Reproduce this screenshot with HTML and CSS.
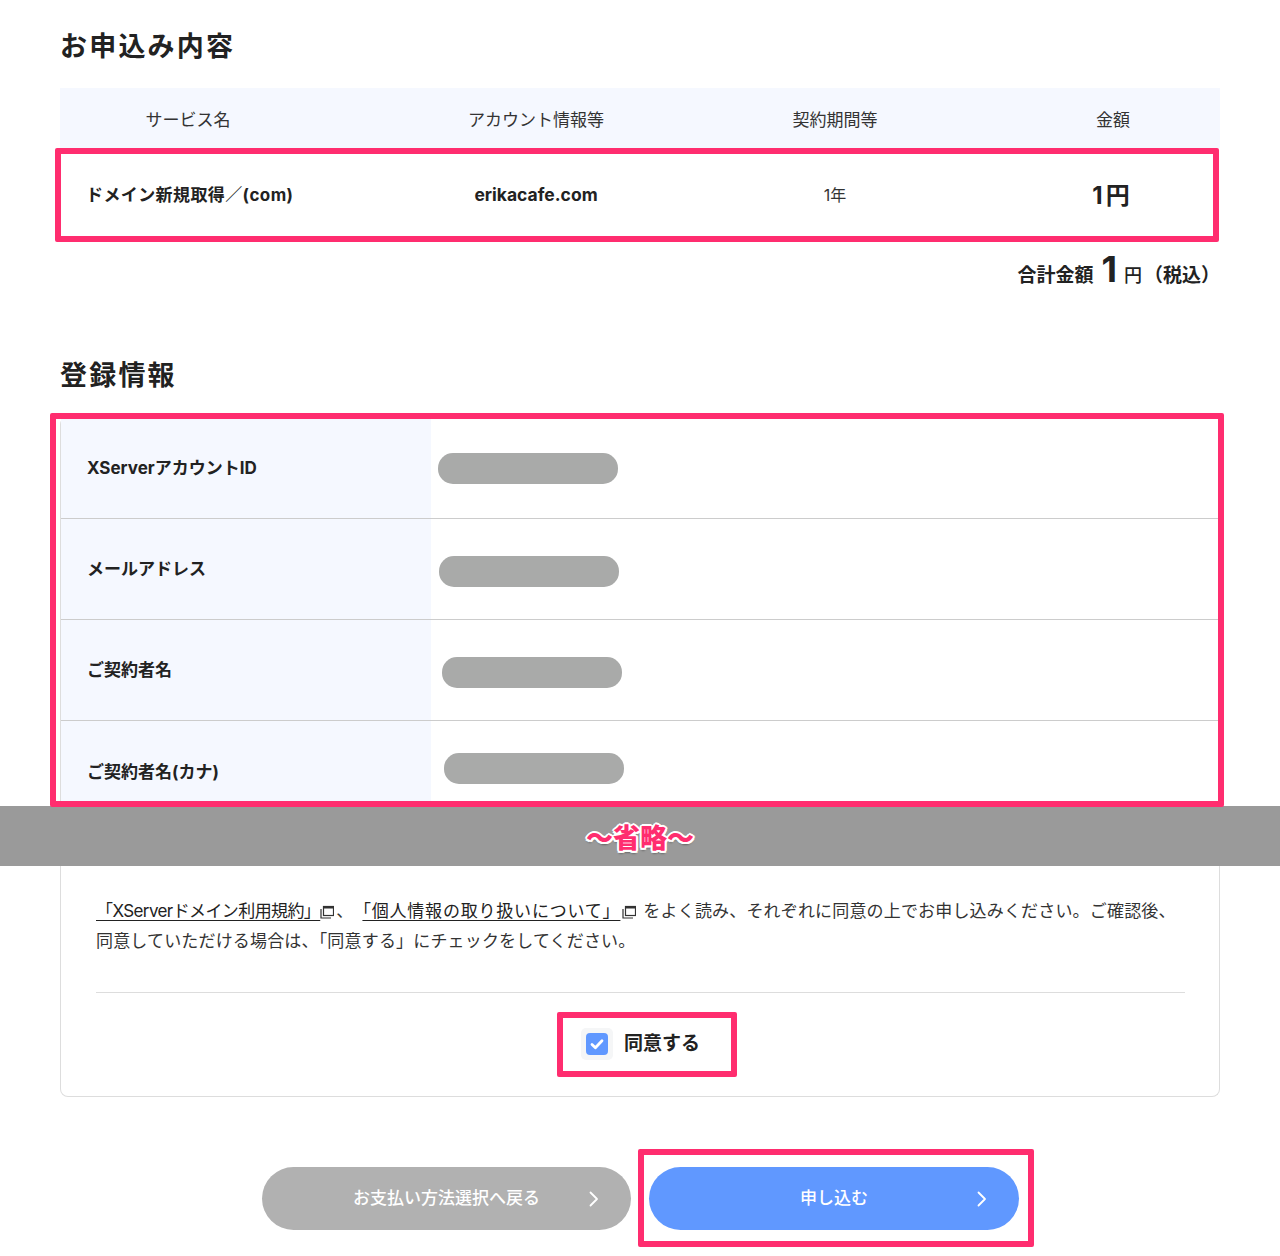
FILE: index.html
```html
<!DOCTYPE html>
<html lang="ja">
<head>
<meta charset="utf-8">
<title>お申込み内容</title>
<link rel="stylesheet" href="styles.css">
</head>
<body>
<div class="top">
  <section class="order">
    <h2 class="heading">お申込み内容</h2>
    <div class="order-table">
      <div class="order-row order-head">
        <div class="c1">サービス名</div>
        <div class="c2">アカウント情報等</div>
        <div class="c3">契約期間等</div>
        <div class="c4">金額</div>
      </div>
      <div class="order-row order-body">
        <div class="c1 service">ドメイン新規取得／(com)</div>
        <div class="c2 domain">erikacafe.com</div>
        <div class="c3 term">1年</div>
        <div class="c4 price">1<span class="yen">円</span></div>
        <div class="mark mark-order"></div>
      </div>
    </div>
    <p class="total">合計金額<b class="total-num">1</b><span class="total-yen">円</span><span class="total-tax">（税込）</span></p>
  </section>
  <section class="info">
    <h2 class="heading heading-wide">登録情報</h2>
    <div class="info-table">
      <div class="info-row"><div class="info-label">XServerアカウントID</div><div class="info-value"><i class="blur blur-1"></i></div></div>
      <div class="info-row"><div class="info-label">メールアドレス</div><div class="info-value"><i class="blur blur-2"></i></div></div>
      <div class="info-row"><div class="info-label">ご契約者名</div><div class="info-value"><i class="blur blur-3"></i></div></div>
      <div class="info-row info-row-last"><div class="info-label">ご契約者名(カナ)</div><div class="info-value"><i class="blur blur-4"></i></div></div>
      <div class="mark mark-info"></div>
    </div>
  </section>
</div>
<div class="omit">〜省略〜</div>
<div class="bottom">
  <section class="agree">
    <p class="agree-text"><a class="link link-1">「XServerドメイン利用規約」</a><svg class="ext" viewBox="0 0 14 14"><rect x="3.500" y="1.500" width="10" height="9" fill="#fff" stroke="#333" stroke-width="1.200"/><rect x="3.500" y="1.500" width="10" height="2" fill="#333"/><path d="M1 4v9h10" fill="none" stroke="#333" stroke-width="1.200"/></svg>、<a class="link link-2">「個人情報の取り扱いについて」</a><svg class="ext ext-2" viewBox="0 0 14 14"><rect x="3.500" y="1.500" width="10" height="9" fill="#fff" stroke="#333" stroke-width="1.200"/><rect x="3.500" y="1.500" width="10" height="2" fill="#333"/><path d="M1 4v9h10" fill="none" stroke="#333" stroke-width="1.200"/></svg> をよく読み、それぞれに同意の上でお申し込みください。ご確認後、<br>同意していただける場合は、「同意する」にチェックをしてください。</p>
    <div class="agree-check">
      <label class="check-label">
        <span class="check-outer"><span class="check-box"><svg viewBox="0 0 20 20" class="check-icon"><path d="M5 10.500l3.400 3.200L15 6.800" fill="none" stroke="#fff" stroke-width="2.800" stroke-linecap="round" stroke-linejoin="round"/></svg></span></span>
        同意する
        <span class="mark mark-check"></span>
      </label>
    </div>
  </section>
  <div class="actions">
    <button class="btn btn-back">お支払い方法選択へ戻る<svg class="chev" viewBox="0 0 12 16"><path d="M2.500 1.500L9 8l-6.500 6.500" fill="none" stroke="#fff" stroke-width="1.800" stroke-linecap="round" stroke-linejoin="round"/></svg></button>
    <button class="btn btn-go">申し込む<svg class="chev" viewBox="0 0 12 16"><path d="M2.500 1.500L9 8l-6.500 6.500" fill="none" stroke="#fff" stroke-width="1.800" stroke-linecap="round" stroke-linejoin="round"/></svg><span class="mark mark-btn"></span></button>
  </div>
</div>
</body>
</html>
```
FILE: styles.css
```css
* { box-sizing: border-box; }
html, body { margin: 0; padding: 0; }
body {
  width: 1280px;
  height: 1256px;
  overflow: hidden;
  background: #fff;
  color: #222;
  font-family: "Inter", "Noto Sans CJK JP", sans-serif;
}
.top { height: 806px; padding: 0 60px; position: relative; z-index: 1; }
.bottom { padding: 0 60px; }
.heading {
  margin: 0;
  height: 88px;
  padding-top: 28px;
  font-size: 27px;
  line-height: 38px;
  font-weight: 700;
  letter-spacing: 2.200px;
  color: #222;
}
.heading-wide { height: 62px; padding-top: 1px; }
.order-row { display: flex; align-items: center; position: relative; }
.order-head { height: 60px; background: #f5f8ff; font-size: 17px; color: #333; text-align: center; }
.order-body { height: 94px; text-align: center; padding-bottom: 2px; }
.c1 { width: 256px; flex: none; }
.c2 { width: 440px; flex: none; }
.c3 { width: 158px; flex: none; }
.c4 { width: 214px; flex: none; margin-left: auto; }
.service { font-size: 17px; font-weight: 700; text-align: left; padding: 0 0 1px 26px; white-space: nowrap; letter-spacing: .4px; }
.domain { font-size: 17.500px; font-weight: 700; }
.term { font-size: 16px; color: #333; }
.price { font-size: 24px; font-weight: 700; padding: 0 4px 2px 0; }
.yen { margin-left: 3px; }
.total {
  margin: 0;
  height: 114px;
  padding: 5px 0 0 0;
  text-align: right;
  font-size: 19px;
  line-height: 44px;
  font-weight: 700;
}
.total-num { font-size: 36px; font-weight: 700; margin: 0 7px 0 8px; }
.total-yen { font-size: 18px; font-weight: 500; margin-right: 2px; }
.info-table { position: relative; border-left: 1px solid #ddd; border-top: 1px solid #ddd; border-top-left-radius: 6px; }
.info-row { display: flex; height: 101px; border-bottom: 1px solid #ccc; }
.info-row:first-child { height: 100px; }
.info-row-last { border-bottom: 0; height: 85px; }
.info-label {
  width: 370px;
  padding: 0 0 4px 26px;
  display: flex;
  align-items: center;
  background: #f5f8ff;
  font-size: 17px;
  font-weight: 700;
}
.info-row-last .info-label { padding: 13px 0 0 26px; }
.info-value { flex: 1; position: relative; }
.blur { position: absolute; width: 180px; height: 31px; border-radius: 15px; background: #a9aaa9; }
.blur-1 { left: 7px; top: 34px; }
.blur-2 { left: 8px; top: 37px; }
.blur-3 { left: 11px; top: 37px; }
.blur-4 { left: 13px; top: 32px; }
.mark { position: absolute; border: 6px solid #ff2d6f; border-radius: 2px; pointer-events: none; }
.mark-order { left: -5px; right: 1px; top: 0; bottom: 0; }
.mark-info { left: -11px; right: -4px; top: -6px; bottom: -1px; }
.mark-check { left: -24px; right: -37px; top: -16px; bottom: -17px; }
.mark-btn { left: -11px; right: -15px; top: -18px; bottom: -17px; }
.omit {
  height: 60px;
  background: #9a9a9a;
  text-align: center;
  font-size: 27px;
  line-height: 66px;
  font-weight: 900;
  color: #ff2d6f;
  text-shadow: -2px 0 #fff, 2px 0 #fff, 0 -2px #fff, 0 2px #fff, -1.500px -1.500px #fff, 1.500px 1.500px #fff, 1.500px -1.500px #fff, -1.500px 1.500px #fff, 0 3px 2px rgba(0,0,0,.35);
}
.agree {
  height: 231px;
  border: 1px solid #ddd;
  border-top: 0;
  border-radius: 0 0 8px 8px;
  padding: 30px 34px 0 35px;
}
.agree-text { margin: 0; height: 97px; font-size: 17px; line-height: 30px; color: #333; border-bottom: 1px solid #ddd; white-space: nowrap; letter-spacing: .17px; }
.link { text-decoration: underline; text-underline-offset: 3px; color: #222; }
.link-1 { letter-spacing: -.6px; }
.link-2 { margin-left: 9px; letter-spacing: .8px; }
.ext { width: 14px; height: 14px; vertical-align: -2px; margin: 0 2px 0 0; }
.ext-2 { margin: 0 2px; }
.agree-check { display: flex; justify-content: center; padding-top: 35px; }
.check-label { position: relative; display: flex; align-items: center; gap: 11px; font-size: 19px; font-weight: 700; line-height: 32px; color: #222; }
.check-outer { width: 32px; height: 32px; border-radius: 5px; background: #f5f6f7; display: flex; align-items: center; justify-content: center; }
.check-box { width: 22px; height: 22px; border-radius: 4px; background: #6098ff; display: flex; align-items: center; justify-content: center; }
.check-icon { width: 20px; height: 20px; }
.actions { display: flex; justify-content: center; gap: 18px; padding: 70px 0 0 1px; }
.btn {
  position: relative;
  width: 370px;
  height: 63px;
  border: 0;
  border-radius: 32px;
  color: #fff;
  font: 500 17px "Inter", "Noto Sans CJK JP", sans-serif;
  padding: 0 0 4px;
}
.btn-back { background: #b1b1b1; width: 369px; }
.btn-go { background: #6098ff; }
.chev { position: absolute; right: 31px; top: 24px; width: 12px; height: 16px; }
```
